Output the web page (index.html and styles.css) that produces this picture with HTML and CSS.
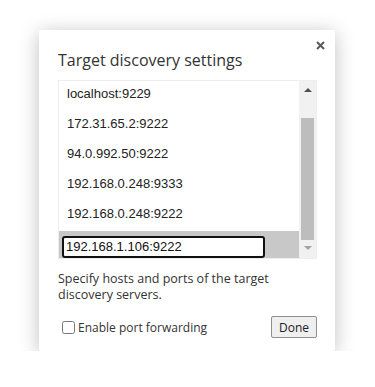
FILE: index.html
```html
<!DOCTYPE html>
<html lang="en">
<head>
    <meta charset="UTF-8">
    <meta name="viewport" content="width=device-width, initial-scale=1.0">
    <title>Target discovery settings</title>
    <link rel="stylesheet" href="styles.css">
</head>
<body>
    <div class="dialog">
        <button class="close" aria-label="Close">
            <svg width="9" height="9" viewBox="0 0 9 9"><path d="M1 1L8 8M8 1L1 8" stroke="#5a5a5a" stroke-width="2"/></svg>
        </button>
        <h2 class="title">Target discovery settings</h2>

        <div class="list">
            <ul class="items">
                <li>localhost:9229</li>
                <li>172.31.65.2:9222</li>
                <li>94.0.992.50:9222</li>
                <li>192.168.0.248:9333</li>
                <li>192.168.0.248:9222</li>
                <li class="selected"><input type="text" value="192.168.1.106:9222"></li>
            </ul>
            <div class="scrollbar">
                <span class="arrow up"></span>
                <div class="thumb"></div>
                <span class="arrow down"></span>
            </div>
        </div>

        <p class="hint">Specify hosts and ports of the target discovery servers.</p>

        <div class="footer">
            <label class="check"><input type="checkbox"> Enable port forwarding</label>
            <button class="done">Done</button>
        </div>
    </div>
</body>
</html>
```

FILE: styles.css
```css
body {
    margin: 0;
    background-color: #fff;
    font-family: "Open Sans", "Noto Sans", sans-serif;
}
.dialog {
    position: relative;
    margin: 30px 0 0 39px;
    width: 296px;
    height: 321px;
    box-sizing: border-box;
    padding: 0 18px 0 19px;
    background-color: #fff;
    box-shadow: 0 3px 20px rgba(0, 0, 0, 0.25);
    border-radius: 2px;
}
.close {
    position: absolute;
    top: 11px;
    right: 10px;
    border: none;
    background: none;
    padding: 0;
    width: 9px;
    height: 9px;
}
.close svg {
    display: block;
}
.title {
    margin: 0;
    padding-top: 19px;
    height: 31px;
    font-weight: normal;
    font-size: 16px;
    line-height: 22px;
    color: #333;
}
.list {
    display: flex;
    height: 179px;
    border: 1px solid #eee;
    box-sizing: border-box;
    overflow: hidden;
}
.items {
    flex: 1;
    list-style: none;
    margin: 0;
    padding: 0;
    font-family: "Liberation Sans", Arial, sans-serif;
    font-size: 13px;
    color: #222;
}
.items li {
    height: 30px;
    line-height: 26px;
    padding-left: 8px;
}
.items li.selected {
    background-color: #c8c8c8;
    padding: 3px 0 0 3px;
    height: 30px;
    box-sizing: border-box;
}
.items input {
    width: 203px;
    height: 22px;
    box-sizing: border-box;
    border: 2px solid #111;
    border-radius: 3px;
    padding: 0 2px;
    font-family: "Liberation Sans", Arial, sans-serif;
    font-size: 13px;
    color: #111;
    outline: none;
}
.scrollbar {
    width: 17px;
    background-color: #f1f1f1;
    display: flex;
    flex-direction: column;
    align-items: center;
}
.arrow {
    width: 0;
    height: 0;
    border-left: 4px solid transparent;
    border-right: 4px solid transparent;
}
.arrow.up {
    margin: 7px 0 0;
    border-bottom: 4px solid #505050;
}
.arrow.down {
    margin: 6px 0 0;
    border-top: 4px solid #a3a3a3;
}
.thumb {
    margin-top: 26px;
    width: 13px;
    height: 122px;
    background-color: #bdbdbd;
}
.hint {
    margin: 12px 0 0;
    max-width: 235px;
    font-size: 12.5px;
    line-height: 16px;
    color: #333;
}
.footer {
    display: flex;
    align-items: center;
    justify-content: space-between;
    margin-top: 13px;
}
.check {
    display: flex;
    align-items: center;
    font-size: 12px;
    color: #333;
}
.check input {
    margin: 0 3px 0 4px;
    width: 13px;
    height: 13px;
}
.done {
    font-family: "Open Sans", "Noto Sans", sans-serif;
    font-size: 12px;
    color: #222;
    background-color: #efefef;
    border: 1px solid #8f8f8f;
    border-radius: 2px;
    padding: 1px 7px;
    height: 22px;
}
```
